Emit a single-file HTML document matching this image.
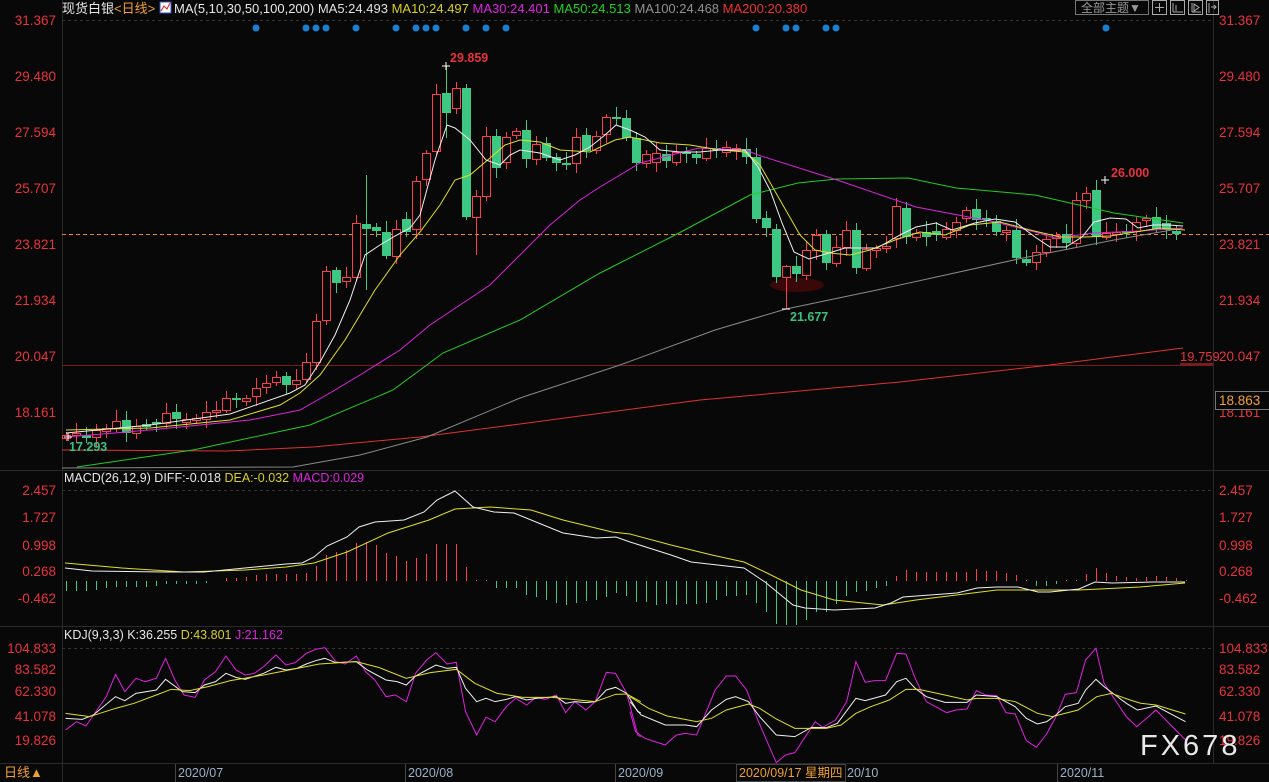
<!DOCTYPE html>
<html><head><meta charset="utf-8"><style>
html,body{margin:0;padding:0;background:#080808;}
body{width:1269px;height:782px;overflow:hidden;position:relative;font-family:"Liberation Sans","Noto Sans CJK SC",sans-serif;}
svg{position:absolute;left:0;top:0;}
text{font-family:"Liberation Sans","Noto Sans CJK SC",sans-serif;}
</style></head><body>
<svg id="s" width="1269" height="782" viewBox="0 0 1269 782" xmlns="http://www.w3.org/2000/svg">
<rect width="1269" height="782" fill="#080808"/>
<g stroke="#2a2a2a" stroke-width="1" fill="none">
<line x1="62.5" y1="0" x2="62.5" y2="782"/>
<line x1="1213.5" y1="0" x2="1213.5" y2="763"/>
<line x1="0" y1="470.5" x2="1269" y2="470.5"/>
<line x1="0" y1="626.5" x2="1269" y2="626.5"/>
<line x1="0" y1="763.5" x2="1269" y2="763.5"/>
</g>
<g stroke="#333" stroke-dasharray="3,3"><line x1="62" y1="20.5" x2="1213" y2="20.5"/><line x1="62" y1="490.5" x2="1213" y2="490.5"/><line x1="62" y1="648.5" x2="1213" y2="648.5"/></g>
<text x="62" y="13" font-size="13" fill="#e8e8e8">现货白银<tspan fill="#f0a030">&lt;日线&gt;</tspan></text>
<rect x="160" y="2" width="11" height="11" fill="#fff" stroke="#3050c0"/>
<polyline points="161,11 164,6 167,9 170,3" stroke="#d02020" fill="none"/>
<text x="174" y="13" font-size="13" fill="#e8e8e8">MA(5,10,30,50,100,200) <tspan fill="#e0e0e0">MA5:24.493</tspan> <tspan fill="#d8d020">MA10:24.497</tspan> <tspan fill="#e020e0">MA30:24.401</tspan> <tspan fill="#20d020">MA50:24.513</tspan> <tspan fill="#909090">MA100:24.468</tspan> <tspan fill="#f03030">MA200:20.380</tspan></text>
<rect x="1075.5" y="0.5" width="73" height="14" fill="none" stroke="#777"/>
<text x="1081" y="12" font-size="12" fill="#999">全部主题▼</text>
<g stroke="#aaa" fill="none">
<rect x="1152.5" y="0.5" width="14" height="14"/><rect x="1170.5" y="0.5" width="14" height="14"/><rect x="1188.5" y="0.5" width="14" height="14"/><rect x="1206.5" y="0.5" width="12" height="14"/>
<path d="M1159.5 3v9M1155 7.5h9M1173 3v9M1173 12h10M1176 5v6M1192 3v9M1192 12h9M1194 4v7l5-3.5z M1209 3v10M1211 7h5M1214 5l2 2-2 2"/>
</g>
<g fill="#1a7fd0">
<circle cx="256" cy="28" r="3.5"/><circle cx="306" cy="28" r="3.5"/><circle cx="316" cy="28" r="3.5"/><circle cx="326" cy="28" r="3.5"/><circle cx="356" cy="28" r="3.5"/><circle cx="396" cy="28" r="3.5"/><circle cx="416" cy="28" r="3.5"/><circle cx="426" cy="28" r="3.5"/><circle cx="436" cy="28" r="3.5"/><circle cx="466" cy="28" r="3.5"/><circle cx="486" cy="28" r="3.5"/><circle cx="506" cy="28" r="3.5"/><circle cx="756" cy="28" r="3.5"/><circle cx="786" cy="28" r="3.5"/><circle cx="796" cy="28" r="3.5"/><circle cx="826" cy="28" r="3.5"/><circle cx="836" cy="28" r="3.5"/><circle cx="1106" cy="28" r="3.5"/>
</g>
<g font-size="13.5" fill="#e8323c" text-anchor="end">
<text x="56" y="25">31.367</text><text x="56" y="81">29.480</text><text x="56" y="137">27.594</text><text x="56" y="193">25.707</text><text x="56" y="249">23.821</text><text x="56" y="305">21.934</text><text x="56" y="361">20.047</text><text x="56" y="417">18.161</text>
<text x="56" y="495">2.457</text><text x="56" y="522">1.727</text><text x="56" y="550">0.998</text><text x="56" y="576">0.268</text><text x="56" y="603">-0.462</text>
<text x="56" y="653">104.833</text><text x="56" y="674">83.582</text><text x="56" y="696">62.330</text><text x="56" y="721">41.078</text><text x="56" y="745">19.826</text>
</g>
<g font-size="13.5" fill="#e8323c">
<text x="1219" y="25">31.367</text><text x="1219" y="81">29.480</text><text x="1219" y="137">27.594</text><text x="1219" y="193">25.707</text><text x="1219" y="249">23.821</text><text x="1219" y="305">21.934</text><text x="1219" y="361">20.047</text><text x="1219" y="417">18.161</text>
<text x="1219" y="495">2.457</text><text x="1219" y="522">1.727</text><text x="1219" y="550">0.998</text><text x="1219" y="576">0.268</text><text x="1219" y="603">-0.462</text>
<text x="1219" y="653">104.833</text><text x="1219" y="674">83.582</text><text x="1219" y="696">62.330</text><text x="1219" y="721">41.078</text><text x="1219" y="745">19.826</text>
</g>
<rect x="1215.5" y="391.5" width="54" height="18" fill="#080808" stroke="#777"/>
<text x="1219" y="405" font-size="13.5" fill="#f0a030">18.863</text>
<line x1="62" y1="365.5" x2="1213" y2="365.5" stroke="#7a1a1a"/>
<line x1="62" y1="234.5" x2="1269" y2="234.5" stroke="#f08020" stroke-dasharray="4,3"/>
<ellipse cx="797" cy="285" rx="27" ry="7" fill="#3a0808"/>
<g id="candles"></g>
<g fill="none" stroke-width="1">
<polyline stroke="#e03030" points="62,450 227,451 313,447 420,437 520,424 700,400 900,382 1050,365 1183,348"/>
<polyline stroke="#8a8a8a" points="62,468 293,467 360,455 427,437 520,398 620,365 715,330 786,309 877,290 1023,258 1114,240 1183,228"/>
<polyline stroke="#22cc22" points="77,467 193,450 310,425 393,390 443,353 520,320 600,273 679,233 750,195 798,183 837,179 908,178 956,188 1035,195 1114,213 1183,223"/>
<polyline stroke="#dd22dd" points="66,437 150,430 250,420 300,410 330,393 360,375 400,350 430,325 460,305 490,285 520,255 550,225 580,200 600,187 640,163 699,148 746,150 758,155 837,180 916,207 995,222 1035,232 1055,238 1094,233 1140,231 1183,228"/>
<polyline stroke="#e0e020" points="66,430 150,428 230,420 280,405 300,393 320,375 345,340 375,290 400,255 420,232 440,205 455,180 470,175 490,158 505,145 520,140 540,142 560,150 590,152 615,140 630,137 660,143 690,145 720,150 745,152 760,165 780,200 800,235 815,250 830,253 850,255 870,250 895,240 920,232 945,235 970,225 1000,222 1030,230 1060,237 1085,237 1110,236 1135,232 1160,228 1185,230"/>
<polyline stroke="#f0f0f0" points="66,433 150,425 230,414 290,393 305,385 320,362 335,335 350,300 365,255 380,245 395,236 410,228 420,215 435,160 447,125 455,128 470,140 486,160 500,165 510,155 520,150 540,153 560,160 575,155 590,147 605,135 616,125 630,130 645,137 660,150 680,152 700,152 720,150 745,150 758,167 770,190 782,223 794,252 809,259 829,253 845,248 877,248 900,235 916,227 936,223 952,230 975,223 995,219 1015,222 1035,237 1050,247 1066,247 1082,237 1094,222 1110,218 1126,219 1138,228 1153,225 1169,225 1183,226"/>
</g>
<line x1="1180" y1="364" x2="1213" y2="364" stroke="#e8323c"/>
<g font-size="12.5" font-weight="bold">
<text x="450" y="62" fill="#e8323c">29.859</text>
<text x="1111" y="177" fill="#e8323c">26.000</text>
<text x="790" y="321" fill="#3cc080">21.677</text>
<text x="69" y="451" fill="#3cc080">17.293</text>
</g>
<text x="1180" y="361" font-size="13" fill="#e8323c">19.759</text>
<g stroke="#fff"><path d="M442 66h8M446 62v8M1101 180h8M1105 176v8M782 309h8M64 437h8M68 433v8"/></g>
<text x="64" y="482" font-size="12.5" fill="#e8e8e8">MACD(26,12,9) DIFF:-0.018 <tspan fill="#d8d020">DEA:-0.032</tspan> <tspan fill="#e020e0">MACD:0.029</tspan></text>
<g id="macd"></g>
<polyline fill="none" stroke="#e0e020" points="65,563 122,568 184,572 245,570 286,567 314,563 347,552 388,533 429,520 455,509 490,507 531,510 563,520 612,532 630,534 671,545 712,555 744,562 765,572 801,590 834,600 883,605 916,600 997,590 1022,590 1079,590 1140,587 1185,583"/>
<polyline fill="none" stroke="#f0f0f0" points="65,568 92,571 163,572 204,572 245,568 286,564 302,563 314,557 327,546 347,537 359,527 375,522 404,520 424,512 437,500 455,491 473,507 494,512 514,513 563,533 596,538 616,537 630,542 671,555 691,562 744,568 765,582 793,605 805,608 834,610 875,608 891,603 903,597 957,593 977,588 997,587 1018,587 1038,592 1050,592 1079,589 1095,582 1112,583 1152,582 1185,582"/>
<text x="64" y="639" font-size="12.5" fill="#e8e8e8">KDJ(9,3,3) K:36.255 <tspan fill="#d8d020">D:43.801</tspan> <tspan fill="#e020e0">J:21.162</tspan></text>
<g fill="none" stroke-width="1">
<g transform="translate(60,640) scale(0.37037,0.33333)">
<polyline vector-effect="non-scaling-stroke" stroke="#e020e0" points="15,270 45,245 70,258 100,210 125,170 150,103 175,155 205,115 230,125 260,115 285,55 310,120 335,165 365,172 390,120 420,95 448,48 475,90 500,105 525,100 550,80 583,45 610,75 635,68 665,40 690,28 715,23 745,65 770,72 800,48 825,95 850,120 880,170 905,165 935,185 960,100 990,60 1015,38 1045,72 1070,67 1095,215 1125,285 1150,232 1175,245 1205,200 1230,175 1260,195 1285,172 1310,178 1340,165 1365,218 1390,185 1420,210 1445,185 1475,97 1500,100 1530,160 1560,285 1568,290"/>
<polyline vector-effect="non-scaling-stroke" stroke="#f0f0f0" points="15,235 60,238 90,225 150,170 175,182 205,160 260,150 285,118 330,155 365,158 390,135 420,125 448,100 475,112 500,118 550,100 583,82 610,90 640,85 665,72 690,62 715,55 745,68 800,65 830,90 880,120 910,125 935,135 960,108 990,90 1015,75 1045,85 1070,82 1095,145 1125,185 1150,175 1175,185 1205,178 1230,170 1260,180 1285,175 1340,170 1365,190 1390,185 1420,188 1445,185 1475,150 1500,142 1530,160 1560,215 1568,218"/>
<polyline vector-effect="non-scaling-stroke" stroke="#e0e020" points="15,220 80,230 150,205 200,190 260,165 300,148 350,152 400,140 460,122 550,105 610,92 700,72 800,65 860,82 935,115 1000,98 1070,88 1120,130 1180,160 1250,172 1330,172 1400,180 1445,185 1500,163 1530,162 1568,185"/>
</g>
<g transform="translate(630,640) scale(0.37037,0.33333)">
<polyline vector-effect="non-scaling-stroke" stroke="#e020e0" points="0,215 15,275 40,295 95,315 125,285 150,280 180,285 230,150 260,108 285,108 315,150 345,240 395,368 420,345 445,338 500,245 520,262 555,240 585,185 610,65 635,127 660,122 690,122 720,40 745,42 770,115 800,185 855,218 880,210 910,207 935,152 960,165 990,167 1015,218 1040,222 1070,302 1097,322 1125,282 1150,230 1175,163 1205,158 1230,60 1258,25 1280,130 1310,180 1340,230 1368,260 1400,230 1420,210 1500,300"/>
<polyline vector-effect="non-scaling-stroke" stroke="#f0f0f0" points="0,185 30,225 95,255 150,255 180,260 220,210 260,178 285,170 320,185 350,230 395,285 445,290 490,262 530,263 560,250 610,175 635,182 690,165 720,125 745,115 770,145 800,170 850,187 910,187 935,165 990,170 1040,200 1070,235 1100,252 1125,245 1150,225 1175,200 1210,190 1230,150 1258,118 1280,140 1310,165 1340,190 1370,210 1420,198 1500,245"/>
<polyline vector-effect="non-scaling-stroke" stroke="#e0e020" points="0,170 50,205 100,228 180,245 220,235 260,210 320,192 350,205 395,237 445,265 530,265 570,255 610,220 650,200 700,180 745,148 780,148 850,165 910,180 935,175 990,175 1040,185 1100,220 1140,230 1210,210 1260,170 1300,160 1350,180 1380,190 1420,195 1500,222"/>
</g>
</g>
<text x="1140" y="755" font-size="29" fill="#e8e8e8" letter-spacing="3">FX678</text>
<text x="4" y="777" font-size="13" fill="#f0a030">日线▲</text>
<g stroke="#444"><line x1="175.5" y1="764" x2="175.5" y2="782"/><line x1="405.5" y1="764" x2="405.5" y2="782"/><line x1="615.5" y1="764" x2="615.5" y2="782"/><line x1="1057.5" y1="764" x2="1057.5" y2="782"/></g>
<g font-size="12.5" fill="#9ab0c8">
<text x="178" y="777">2020/07</text><text x="408" y="777">2020/08</text><text x="618" y="777">2020/09</text><text x="847" y="777">20/10</text><text x="1060" y="777">2020/11</text>
</g>
<rect x="736.5" y="764.5" width="109" height="17" fill="#080808" stroke="#444"/>
<text x="739" y="777" font-size="12.5" fill="#f0a030">2020/09/17 星期四</text>
</svg>
<script>
var C=[[435,438,'r'],[433,435,'r'],[435,438,'g'],[430,437,'r'],[428,431,'r'],[421,428,'r'],[420,433,'g'],[426,433,'r'],[424,427,'g'],[422,424,'g'],[413,423,'r'],[412,419,'g'],[419,422,'r'],[418,420,'r'],[412,419,'r'],[410,412,'r'],[398,410,'r'],[398,400,'g'],[398,401,'r'],[388,396,'r'],[383,387,'r'],[377,382,'r'],[376,385,'g'],[380,384,'r'],[362,379,'r'],[321,362,'r'],[271,320,'r'],[270,283,'g'],[277,281,'r'],[223,277,'r'],[224,229,'g',175,290],[227,231,'g'],[232,256,'g'],[229,256,'r'],[219,232,'g'],[181,229,'r'],[153,179,'r'],[94,151,'r'],[93,113,'g',66,138],[88,108,'r'],[88,217,'g'],[196,217,'r',190,255],[136,196,'r'],[136,168,'g'],[137,162,'r'],[131,135,'r'],[130,159,'g'],[144,159,'r'],[143,158,'g'],[157,163,'g'],[163,165,'g'],[137,163,'r'],[135,151,'g'],[136,150,'r'],[117,134,'r'],[117,119,'g'],[118,138,'g'],[138,163,'g'],[154,163,'r'],[153,162,'r'],[154,161,'g'],[152,162,'r'],[152,154,'g'],[154,158,'g'],[148,158,'r'],[148,150,'g'],[147,152,'r'],[148,150,'r'],[149,157,'g'],[157,219,'g'],[218,228,'g'],[229,277,'g'],[266,277,'r',265,309],[266,274,'g'],[250,275,'r'],[235,250,'r'],[234,263,'g'],[247,263,'r'],[230,247,'r'],[230,268,'g'],[249,268,'r'],[248,250,'r'],[246,248,'r'],[206,238,'r'],[208,237,'g'],[233,237,'r'],[232,237,'g'],[231,235,'g'],[229,237,'r'],[222,230,'r'],[210,218,'r'],[209,220,'g'],[218,220,'g'],[221,232,'g'],[230,232,'r'],[230,258,'g'],[259,263,'g'],[252,262,'r'],[239,252,'r'],[235,238,'r'],[234,243,'g'],[200,243,'r'],[193,200,'r'],[190,237,'g',180,245],[233,237,'r'],[232,234,'r'],[231,233,'g'],[222,231,'r'],[218,220,'r'],[217,229,'g'],[223,230,'g'],[231,234,'g']];
var h='';
for(var i=0;i<C.length;i++){var c=C[i],x=66+10*i,t=c[0],b=c[1];var hi=c[3]!==undefined?c[3]:t-((i*7)%9+3),lo=c[4]!==undefined?c[4]:b+((i*5)%8+3);
var col=c[2]=='r'?'#ff3c4c':'#3cc882';
h+='<line x1="'+(x+.5)+'" y1="'+hi+'" x2="'+(x+.5)+'" y2="'+lo+'" stroke="'+col+'"/>';
if(c[2]=='r'){h+='<rect x="'+(x-3.5)+'" y="'+t+'.5" width="8" height="'+Math.max(1,b-t)+'" fill="#080808" stroke="'+col+'"/>';}
else{h+='<rect x="'+(x-4)+'" y="'+t+'" width="9" height="'+Math.max(2,b-t)+'" fill="'+col+'"/>';}}
document.getElementById('candles').innerHTML=h;
var M=[-10,-10,-10,-9,-7,-6,-6,-6,-6,-5,-3,-3,-3,-3,-2,0,3,3,4,6,7,7,7,7,8,15,26,29,31,38,39,36,28,25,20,23,27,37,37,37,14,1,1,-7,-7,-7,-14,-16,-19,-22,-24,-22,-20,-19,-16,-12,-15,-21,-21,-24,-23,-24,-23,-23,-22,-19,-15,-15,-14,-22,-31,-43,-44,-44,-39,-31,-31,-23,-15,-11,-10,-7,-5,5,11,9,9,9,9,9,9,12,10,10,8,6,1,-5,-5,-3,1,1,7,13,8,5,4,3,4,5,4,3,1];
var m='';for(var i=0;i<M.length;i++){var x=66+10*i+.5,v=M[i];if(v==0)continue;var col=v>0?'#ff3c4c':'#3cc882';m+='<line x1="'+x+'" y1="581" x2="'+x+'" y2="'+(581-v)+'" stroke="'+col+'"/>';}
document.getElementById('macd').innerHTML=m;
</script>
</body></html>
